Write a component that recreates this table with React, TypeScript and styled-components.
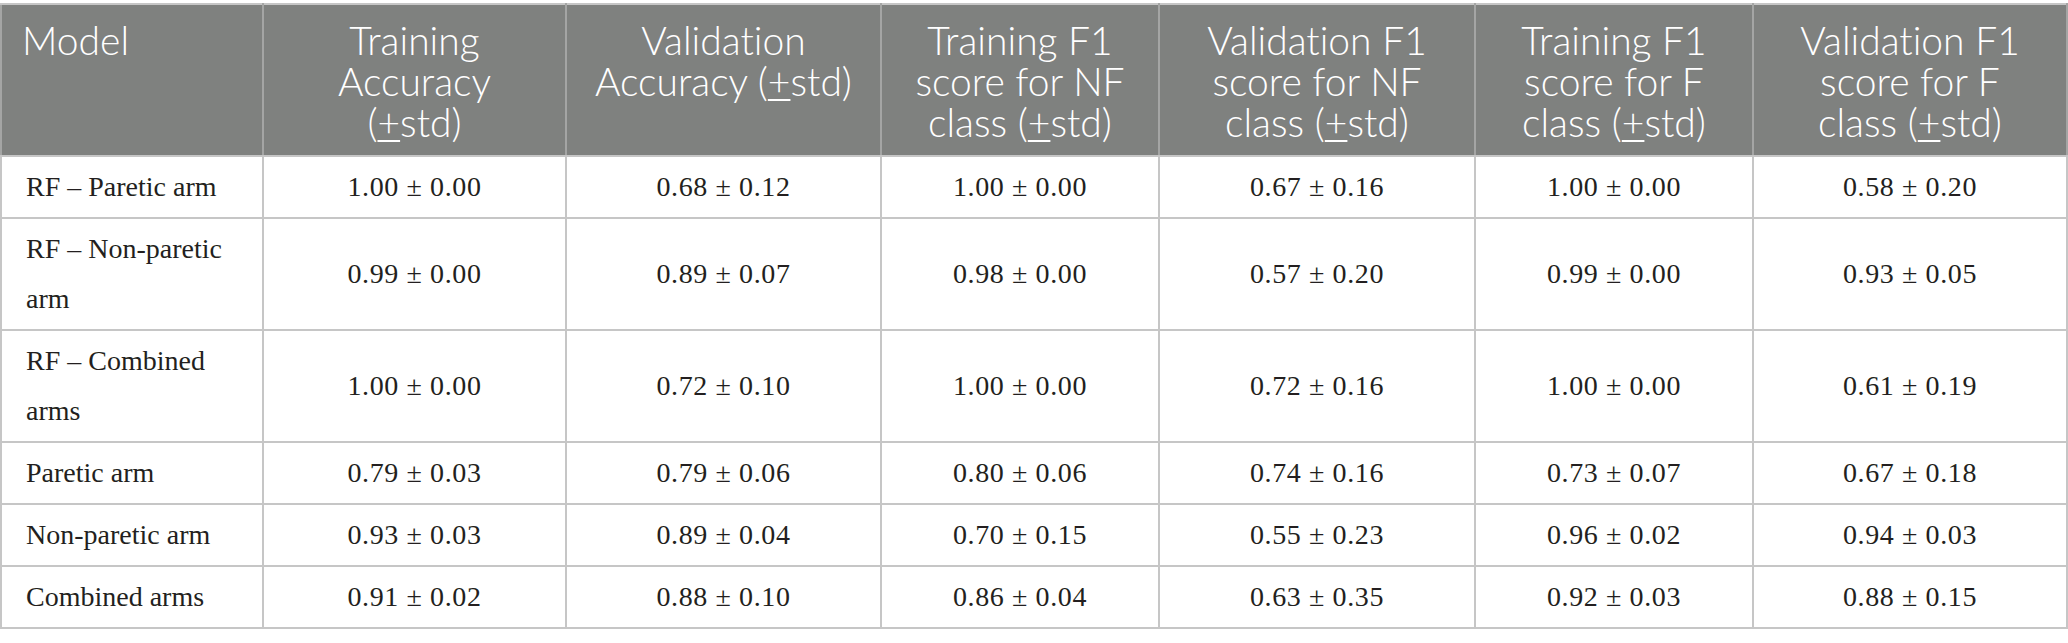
import React from 'react'
import styled, { createGlobalStyle } from 'styled-components'

// ---------- data ----------

const COL_WIDTHS = [262, 303, 315, 278, 316, 278, 314]

// each header is a list of lines; "±" is drawn as an underlined plus
const HEADERS: string[][] = [
  ['Model'],
  ['Training', 'Accuracy', '(±std)'],
  ['Validation', 'Accuracy (±std)'],
  ['Training F1', 'score for NF', 'class (±std)'],
  ['Validation F1', 'score for NF', 'class (±std)'],
  ['Training F1', 'score for F', 'class (±std)'],
  ['Validation F1', 'score for F', 'class (±std)'],
]

interface Row {
  model: string[]
  values: string[]
}

const ROWS: Row[] = [
  {
    model: ['RF – Paretic arm'],
    values: ['1.00 ± 0.00', '0.68 ± 0.12', '1.00 ± 0.00', '0.67 ± 0.16', '1.00 ± 0.00', '0.58 ± 0.20'],
  },
  {
    model: ['RF – Non-paretic', 'arm'],
    values: ['0.99 ± 0.00', '0.89 ± 0.07', '0.98 ± 0.00', '0.57 ± 0.20', '0.99 ± 0.00', '0.93 ± 0.05'],
  },
  {
    model: ['RF – Combined', 'arms'],
    values: ['1.00 ± 0.00', '0.72 ± 0.10', '1.00 ± 0.00', '0.72 ± 0.16', '1.00 ± 0.00', '0.61 ± 0.19'],
  },
  {
    model: ['Paretic arm'],
    values: ['0.79 ± 0.03', '0.79 ± 0.06', '0.80 ± 0.06', '0.74 ± 0.16', '0.73 ± 0.07', '0.67 ± 0.18'],
  },
  {
    model: ['Non-paretic arm'],
    values: ['0.93 ± 0.03', '0.89 ± 0.04', '0.70 ± 0.15', '0.55 ± 0.23', '0.96 ± 0.02', '0.94 ± 0.03'],
  },
  {
    model: ['Combined arms'],
    values: ['0.91 ± 0.02', '0.88 ± 0.10', '0.86 ± 0.04', '0.63 ± 0.35', '0.92 ± 0.03', '0.88 ± 0.15'],
  },
]

// ---------- styles ----------

const GlobalStyle = createGlobalStyle`
  html, body {
    margin: 0;
    padding: 0;
    background: #ffffff;
  }
`

const Page = styled.div`
  padding-top: 3px;
  width: 2068px;
`

const Table = styled.table`
  width: 2067px;
  border-collapse: collapse;
  table-layout: fixed;
  border: 2px solid #c6c6c6;
`

const HeadRow = styled.tr`
  background: #7f817f;
`

const HeadCell = styled.th<{ $left?: boolean }>`
  padding: 15px 20px 12px;
  vertical-align: top;
  text-align: ${(p) => (p.$left ? 'left' : 'center')};
  font-family: Lato, 'Open Sans', sans-serif;
  font-weight: 300;
  font-size: 39px;
  line-height: 41px;
  font-variant-ligatures: none;
  color: #ffffff;
  border: 2px solid #a4a5a4;
  border-top-color: #c6c6c6;
  border-bottom-color: #c6c6c6;
`

const PlusMinus = styled.span`
  text-decoration: underline;
  text-decoration-thickness: 2px;
  text-underline-offset: 3px;
`

const Cell = styled.td<{ $left?: boolean }>`
  padding: 5px 20px 5px ${(p) => (p.$left ? '24px' : '20px')};
  vertical-align: middle;
  text-align: ${(p) => (p.$left ? 'left' : 'center')};
  font-family: 'Liberation Serif', 'Times New Roman', serif;
  font-size: 28px;
  letter-spacing: ${(p) => (p.$left ? '0' : '0.6px')};
  line-height: 50px;
  color: #231f20;
  border: 2px solid #c6c6c6;
`

// ---------- render ----------

function HeaderLine({ text }: { text: string }) {
  const parts = text.split('±')
  return (
    <>
      {parts.map((part, i) => (
        <React.Fragment key={i}>
          {i > 0 && <PlusMinus>+</PlusMinus>}
          {part}
        </React.Fragment>
      ))}
    </>
  )
}

export default function App() {
  return (
    <Page>
      <GlobalStyle />
      <Table>
        <colgroup>
          {COL_WIDTHS.map((w, i) => (
            <col key={i} style={{ width: w }} />
          ))}
        </colgroup>
        <thead>
          <HeadRow>
            {HEADERS.map((lines, i) => (
              <HeadCell key={i} $left={i === 0}>
                {lines.map((line, j) => (
                  <React.Fragment key={j}>
                    {j > 0 && <br />}
                    <HeaderLine text={line} />
                  </React.Fragment>
                ))}
              </HeadCell>
            ))}
          </HeadRow>
        </thead>
        <tbody>
          {ROWS.map((row, i) => (
            <tr key={i}>
              <Cell $left>
                {row.model.map((line, j) => (
                  <React.Fragment key={j}>
                    {j > 0 && <br />}
                    {line}
                  </React.Fragment>
                ))}
              </Cell>
              {row.values.map((v, j) => (
                <Cell key={j}>{v}</Cell>
              ))}
            </tr>
          ))}
        </tbody>
      </Table>
    </Page>
  )
}
